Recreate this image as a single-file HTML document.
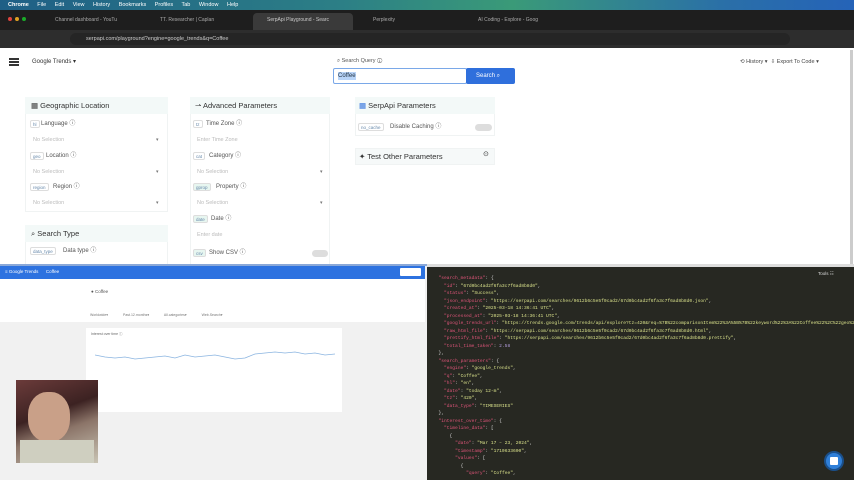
<!DOCTYPE html>
<html><head><meta charset="utf-8"><style>
*{margin:0;padding:0;box-sizing:border-box}
body{width:854px;height:480px;overflow:hidden;position:relative;font-family:"Liberation Sans",sans-serif;background:#fff}
.a{position:absolute}
.t{font-size:6px;color:#555;white-space:nowrap;line-height:8px}
.hd{font-size:7.5px;color:#333;white-space:nowrap}
.tag{position:absolute;font-size:4.5px;color:#68a;border:1px solid #ddd;border-radius:2px;padding:0 2px;height:8px;line-height:7px}
.ph{position:absolute;font-size:5.5px;color:#bbb}
.dd{position:absolute;font-size:5px;color:#777}
.code{font-family:"Liberation Mono",monospace;font-size:4.6px;line-height:7.5px;white-space:pre;color:#ddd}
.k{color:#e0557a}.s{color:#d8e08a}.n{color:#b39ddb}
</style></head><body>
<div class="a" style="left:0;top:0;width:854px;height:10px;background:linear-gradient(90deg,#1f5f86,#2c7f86 40%,#3a9a78 60%,#2a6fa8 85%,#2563b8)"></div>
<div class="a t" style="left:8px;top:1px;color:#fff;font-size:5.5px;word-spacing:7px"> <b>Chrome</b> File Edit View History Bookmarks Profiles Tab Window Help</div>
<div class="a" style="left:0;top:10px;width:854px;height:20px;background:#1e1e1e"></div>
<div class="a" style="left:8px;top:17px;width:4px;height:4px;border-radius:50%;background:#e0443e"></div>
<div class="a" style="left:15px;top:17px;width:4px;height:4px;border-radius:50%;background:#dea123"></div>
<div class="a" style="left:22px;top:17px;width:4px;height:4px;border-radius:50%;background:#1aab29"></div>
<div class="a" style="left:253px;top:13px;width:100px;height:17px;background:#3a3a3a;border-radius:4px 4px 0 0"></div>
<div class="a t" style="left:55px;top:16px;color:#aaa;font-size:5px">Channel dashboard - YouTu</div>
<div class="a t" style="left:160px;top:16px;color:#aaa;font-size:5px">TT. Researcher | Caplan</div>
<div class="a t" style="left:267px;top:16px;color:#ccc;font-size:5px">SerpApi Playground - Searc</div>
<div class="a t" style="left:373px;top:16px;color:#aaa;font-size:5px">Perplexity</div>
<div class="a t" style="left:478px;top:16px;color:#aaa;font-size:5px">AI Coding - Explore - Goog</div>
<div class="a" style="left:0;top:30px;width:854px;height:18px;background:#2d2d2d"></div>
<div class="a" style="left:70px;top:33px;width:720px;height:12px;border-radius:6px;background:#252525"></div>
<div class="a t" style="left:86px;top:35px;color:#ccc;font-size:5.5px">serpapi.com/playground?engine=google_trends&amp;q=Coffee</div>
<div class="a" style="left:9px;top:58px;width:10px;height:1.5px;background:#333;box-shadow:0 3px #333,0 6px #333"></div>
<div class="a t" style="left:32px;top:58px;color:#333">Google Trends ▾</div>
<div class="a t" style="left:337px;top:57px;font-size:5.5px">⌕ Search Query ⓘ</div>
<div class="a" style="left:333px;top:68px;width:134px;height:16px;border:1.5px solid #7aa8e8;border-radius:2px"></div>
<div class="a t" style="left:338px;top:72px;color:#234;background:#b8d4f8;font-size:6px">Coffee</div>
<div class="a" style="left:466px;top:68px;width:49px;height:16px;background:#2f6fdc;border-radius:2px"></div>
<div class="a t" style="left:476px;top:72px;color:#fff">Search ⌕</div>
<div class="a t" style="left:740px;top:58px;font-size:5.5px;color:#444">⟲ History ▾ &nbsp;⇩ Export To Code ▾</div>
<div class="a" style="left:850px;top:50px;width:3px;height:214px;background:#ccc"></div>

<div class="a" style="left:25px;top:97px;width:143px;height:115px;background:#fff;border:1px solid #f0f3f3"></div>
<div class="a" style="left:25px;top:97px;width:143px;height:17px;background:#f3f9f8"></div>
<div class="a hd" style="left:31px;top:101px">▦ Geographic Location</div>
<div class="tag" style="left:30px;top:120px">hl</div><div class="a t" style="left:41px;top:120px">Language ⓘ</div>
<div class="ph" style="left:33px;top:137px">No Selection</div><div class="dd" style="left:156px;top:137px">▾</div>
<div class="tag" style="left:30px;top:152px">geo</div><div class="a t" style="left:46px;top:152px">Location ⓘ</div>
<div class="ph" style="left:33px;top:169px">No Selection</div><div class="dd" style="left:156px;top:169px">▾</div>
<div class="tag" style="left:30px;top:183px">region</div><div class="a t" style="left:53px;top:183px">Region ⓘ</div>
<div class="ph" style="left:33px;top:200px">No Selection</div><div class="dd" style="left:156px;top:200px">▾</div>
<div class="a" style="left:25px;top:225px;width:143px;height:40px;border:1px solid #f0f3f3"></div>
<div class="a" style="left:25px;top:225px;width:143px;height:17px;background:#f3f9f8"></div>
<div class="a hd" style="left:31px;top:229px">⌕ Search Type</div>
<div class="tag" style="left:30px;top:247px">data_type</div><div class="a t" style="left:63px;top:247px">Data type ⓘ</div>

<div class="a" style="left:190px;top:97px;width:140px;height:168px;border:1px solid #f0f3f3"></div>
<div class="a" style="left:190px;top:97px;width:140px;height:17px;background:#f3f9f8"></div>
<div class="a hd" style="left:195px;top:101px">⇀ Advanced Parameters</div>
<div class="tag" style="left:193px;top:120px">tz</div><div class="a t" style="left:206px;top:120px">Time Zone ⓘ</div>
<div class="ph" style="left:197px;top:137px">Enter Time Zone</div>
<div class="tag" style="left:193px;top:152px">cat</div><div class="a t" style="left:209px;top:152px">Category ⓘ</div>
<div class="ph" style="left:197px;top:169px">No Selection</div><div class="dd" style="left:320px;top:169px">▾</div>
<div class="tag" style="left:193px;top:183px;background:#e7f6f0">gprop</div><div class="a t" style="left:216px;top:183px">Property ⓘ</div>
<div class="ph" style="left:197px;top:200px">No Selection</div><div class="dd" style="left:320px;top:200px">▾</div>
<div class="tag" style="left:193px;top:215px;background:#e7f6f0">date</div><div class="a t" style="left:211px;top:215px">Date ⓘ</div>
<div class="ph" style="left:197px;top:232px">Enter date</div>
<div class="tag" style="left:193px;top:249px;background:#e7f6f0">csv</div><div class="a t" style="left:209px;top:249px">Show CSV ⓘ</div>
<div class="a" style="left:312px;top:250px;width:16px;height:7px;border-radius:4px;background:#ddd"></div>

<div class="a" style="left:355px;top:97px;width:140px;height:39px;border:1px solid #f0f3f3"></div>
<div class="a" style="left:355px;top:97px;width:140px;height:17px;background:#f3f9f8"></div>
<div class="a hd" style="left:359px;top:101px"><span style="color:#2f6fdc">▦</span> SerpApi Parameters</div>
<div class="tag" style="left:358px;top:123px">no_cache</div><div class="a t" style="left:390px;top:123px">Disable Caching ⓘ</div>
<div class="a" style="left:475px;top:124px;width:17px;height:7px;border-radius:4px;background:#ddd"></div>
<div class="a" style="left:355px;top:148px;width:140px;height:17px;background:#f6f9f9;border:1px solid #f0f3f3"></div>
<div class="a hd" style="left:359px;top:152px">✦ Test Other Parameters</div>
<div class="a t" style="left:483px;top:151px;font-size:7px;color:#333">⊙</div>

<div class="a" style="left:0;top:264px;width:427px;height:216px;background:#f1f1f1;border-top:2px solid #8aa8d8"></div>
<div class="a" style="left:0;top:266px;width:425px;height:13px;background:#2d72e0"></div>
<div class="a t" style="left:5px;top:268px;color:#fff;font-size:4.5px">≡ Google Trends &nbsp;&nbsp;&nbsp;&nbsp;&nbsp;Coffee</div>
<div class="a" style="left:400px;top:268px;width:21px;height:8px;background:#fff;border-radius:1px"></div>
<div class="a" style="left:0;top:279px;width:425px;height:43px;background:#fff"></div>
<div class="a t" style="left:91px;top:288px;font-size:4.5px">● Coffee</div>
<div class="a t" style="left:90px;top:311px;font-size:3.5px;color:#777;word-spacing:14px">Worldwide▾ Past.12.months▾ All.categories▾ Web.Search▾</div>
<div class="a" style="left:86px;top:328px;width:256px;height:84px;background:#fff"></div>
<div class="a t" style="left:91px;top:330px;font-size:3.5px;color:#666">Interest over time ⓘ</div>
<svg class="a" style="left:95px;top:350px" width="240" height="20"><polyline fill="none" stroke="#8ab4e0" stroke-width="0.8" points="0,5 10,7 20,8 30,7 40,9 50,8 60,7 70,6 80,8 90,5 100,7 110,6 120,5 130,7 140,9 150,8 160,4 170,3 180,2 190,3 200,2 210,4 220,3 230,5 240,4"/></svg>
<div class="a" style="left:16px;top:380px;width:82px;height:83px;background:linear-gradient(160deg,#6b3b3a,#3c2222 40%,#8b7468 60%,#c9c4b4)"></div>
<div class="a" style="left:28px;top:392px;width:42px;height:50px;border-radius:45%;background:#c9a088"></div>
<div class="a" style="left:20px;top:440px;width:74px;height:23px;background:#cfcfc0"></div>

<div class="a" style="left:427px;top:264px;width:427px;height:216px;background:#272822;overflow:hidden">
<div class="a" style="left:0;top:0;width:427px;height:3px;background:#ddd"></div>
<div class="a t" style="left:391px;top:6px;color:#ddd;font-size:4.5px">Tools ☷</div>
<div class="a code" style="left:6px;top:11px"><span class="k">  "search_metadata"</span>: {
    <span class="k">"id"</span>: <span class="s">"67d0bc4ad2f6fa3c7f6ad8b8d0"</span>,
    <span class="k">"status"</span>: <span class="s">"Success"</span>,
    <span class="k">"json_endpoint"</span>: <span class="s">"https://serpapi.com/searches/9612b6c5e5f0cad2/67d0bc4ad2f6fa3c7f6ad8b8d0.json"</span>,
    <span class="k">"created_at"</span>: <span class="s">"2025-03-18 14:36:41 UTC"</span>,
    <span class="k">"processed_at"</span>: <span class="s">"2025-03-18 14:36:41 UTC"</span>,
    <span class="k">"google_trends_url"</span>: <span class="s">"https://trends.google.com/trends/api/explore?tz=420&amp;req=%7B%22comparisonItem%22%3A%5B%7B%22keyword%22%3A%22Coffee%22%2C%22geo%22%3A%22%22%7D%5D%2C%22category%22"</span>
    <span class="k">"raw_html_file"</span>: <span class="s">"https://serpapi.com/searches/9612b6c5e5f0cad2/67d0bc4ad2f6fa3c7f6ad8b8d0.html"</span>,
    <span class="k">"prettify_html_file"</span>: <span class="s">"https://serpapi.com/searches/9612b6c5e5f0cad2/67d0bc4ad2f6fa3c7f6ad8b8d0.prettify"</span>,
    <span class="k">"total_time_taken"</span>: <span class="n">2.58</span>
  },
<span class="k">  "search_parameters"</span>: {
    <span class="k">"engine"</span>: <span class="s">"google_trends"</span>,
    <span class="k">"q"</span>: <span class="s">"Coffee"</span>,
    <span class="k">"hl"</span>: <span class="s">"en"</span>,
    <span class="k">"date"</span>: <span class="s">"today 12-m"</span>,
    <span class="k">"tz"</span>: <span class="s">"420"</span>,
    <span class="k">"data_type"</span>: <span class="s">"TIMESERIES"</span>
  },
<span class="k">  "interest_over_time"</span>: {
    <span class="k">"timeline_data"</span>: [
      {
        <span class="k">"date"</span>: <span class="s">"Mar 17 – 23, 2024"</span>,
        <span class="k">"timestamp"</span>: <span class="s">"1710633600"</span>,
        <span class="k">"values"</span>: [
          {
            <span class="k">"query"</span>: <span class="s">"Coffee"</span>,</div>
<div class="a" style="left:397px;top:187px;width:20px;height:20px;border-radius:50%;background:#2f7fd8;border:2px solid #1a4f8a"></div>
<div class="a" style="left:403px;top:193px;width:8px;height:8px;background:#fff;border-radius:1px"></div>
</div>
</body></html>
